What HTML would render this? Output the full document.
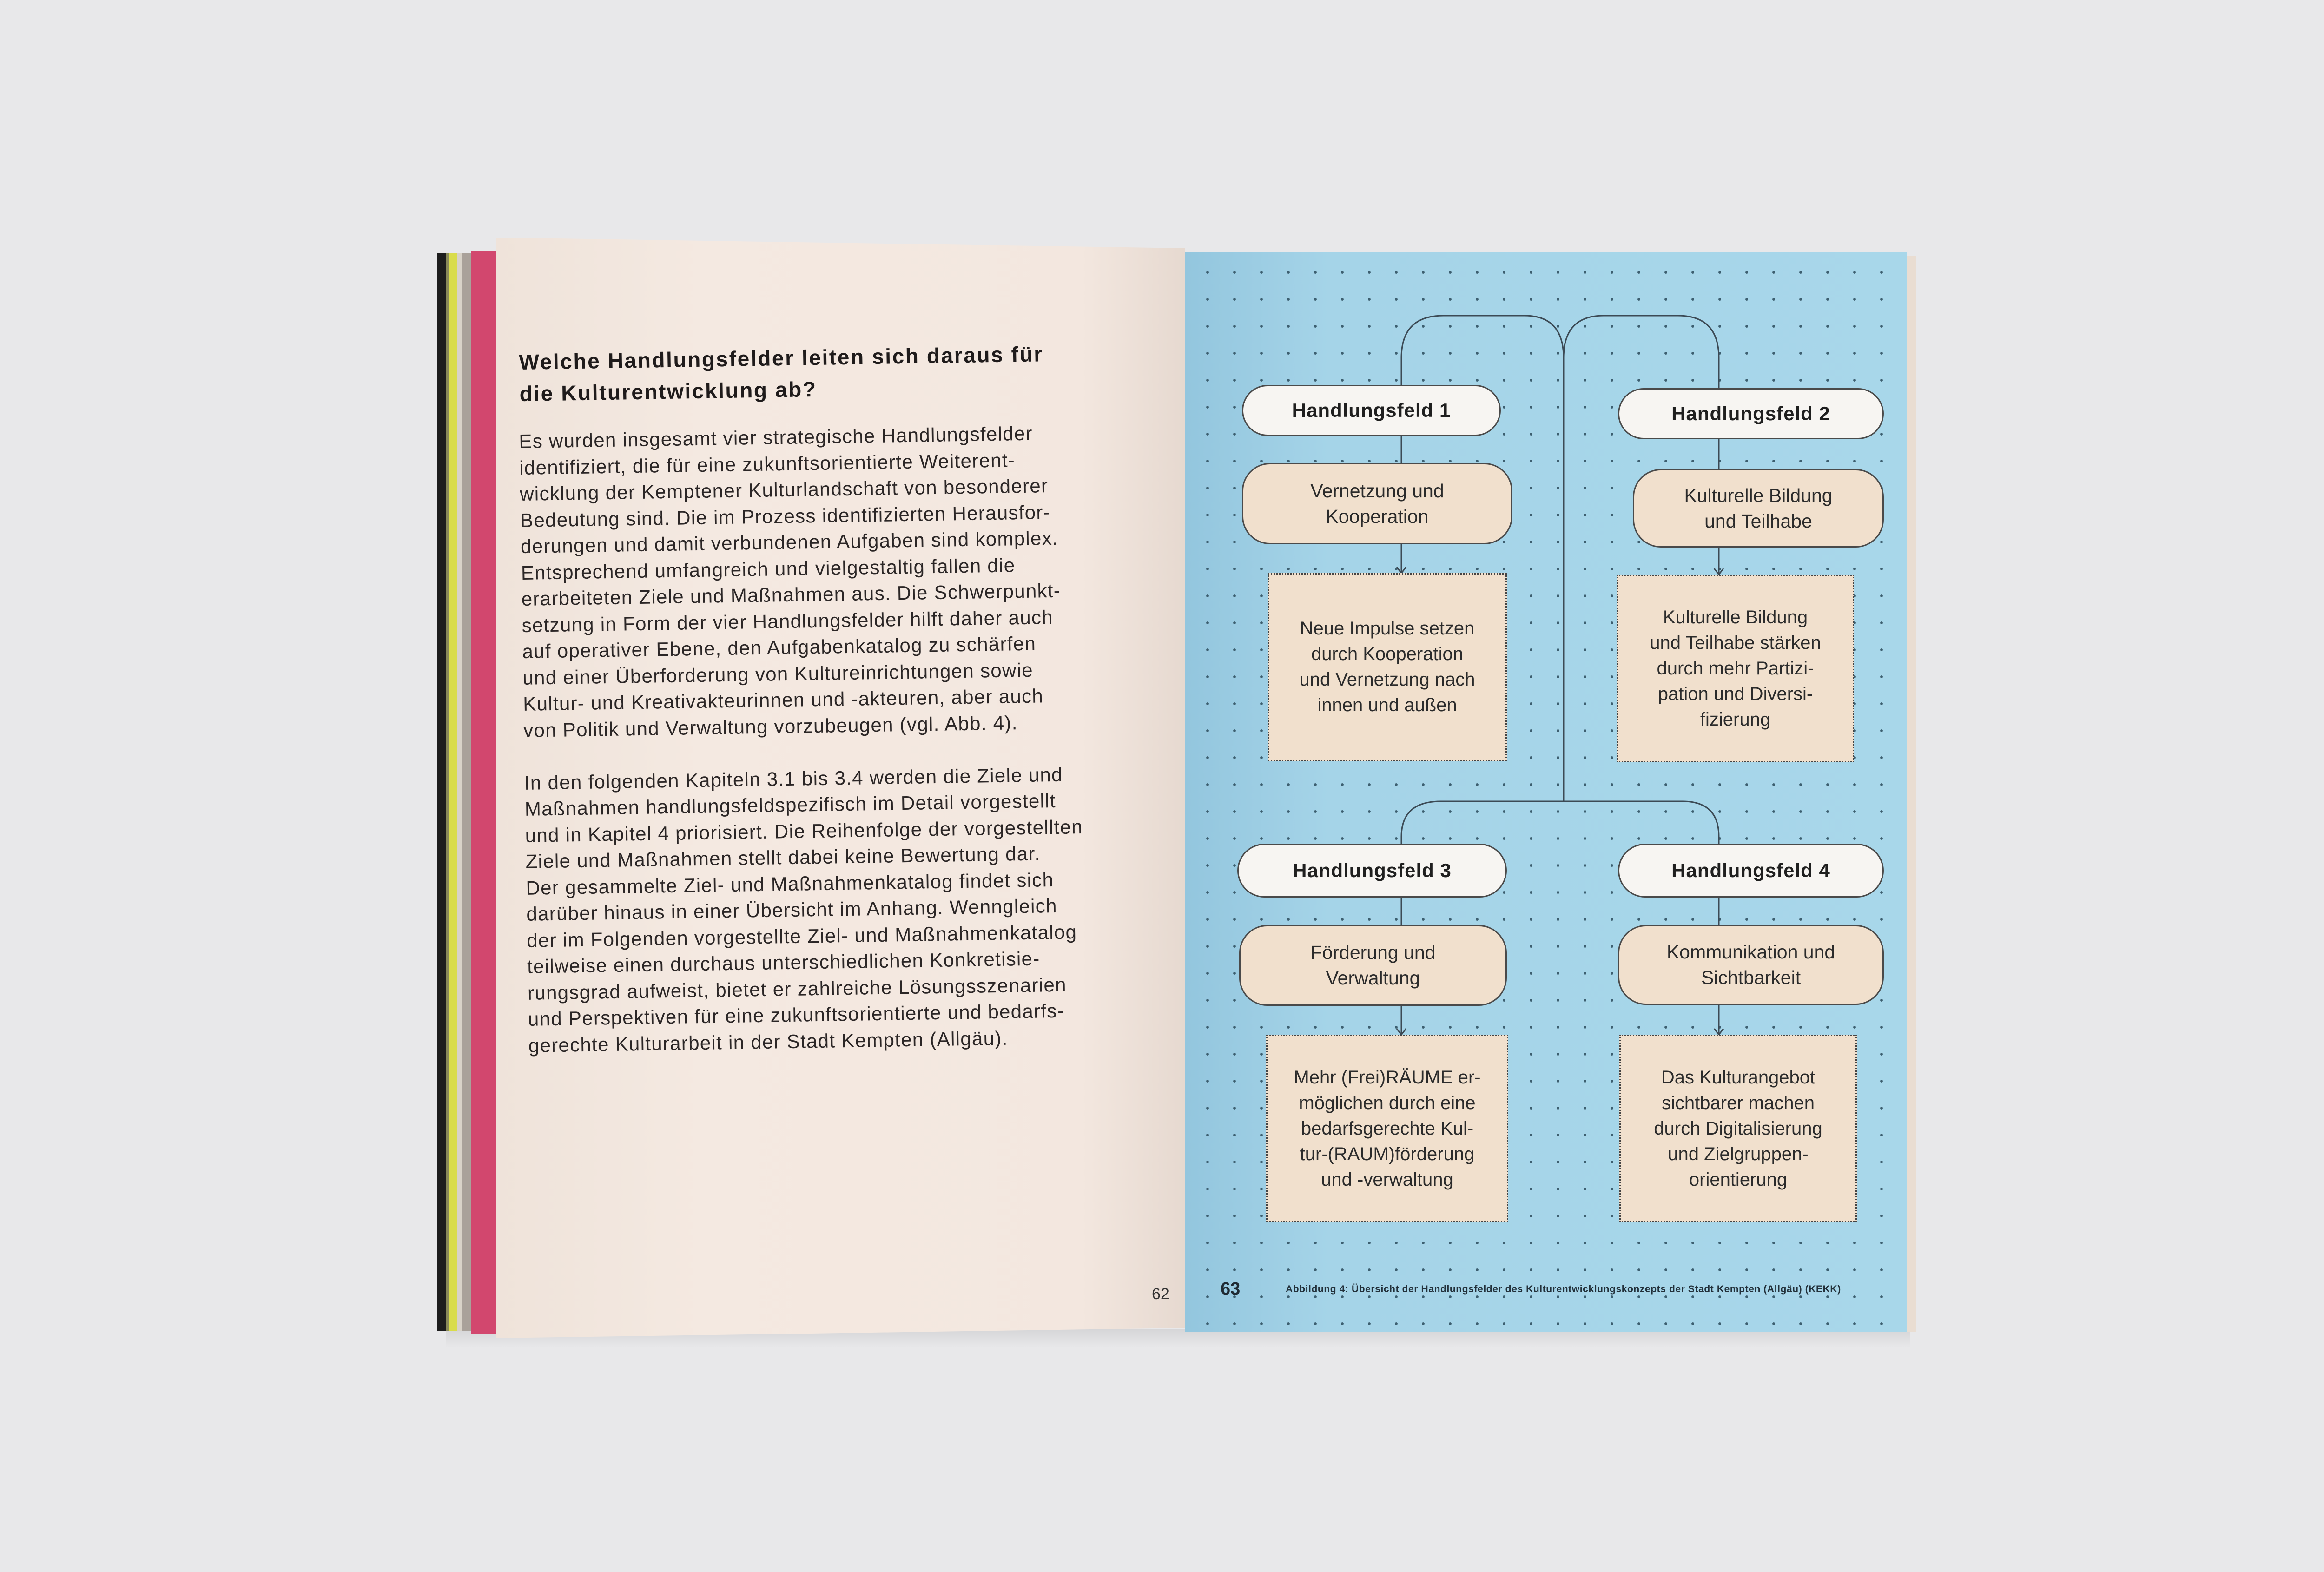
<!DOCTYPE html>
<html><head><meta charset="utf-8">
<style>
html,body{margin:0;padding:0}
body{width:5073px;height:3382px;background:#e8e8ea;position:relative;overflow:hidden;font-family:"Liberation Sans",sans-serif;color:#2a2626}
.abs{position:absolute}
.strip{position:absolute;top:545px;height:2318px}
.lp{position:absolute;left:1068px;top:511px;width:1481px;height:2368px;
 background:linear-gradient(90deg,#efe3da 0%,#f4e9e1 30%,#f3e7df 85%,#e6d9d0 100%);
 clip-path:polygon(0 0,100% 23px,100% 2346px,0 100%)}
.rp{position:absolute;left:2549px;top:543px;width:1553px;height:2323px;
 background-color:#a3d2e6;
 background-image:radial-gradient(circle,#3d5f70 2.6px,transparent 3.2px),linear-gradient(90deg,#93c6de 0%,#a5d4e8 20%,#a8d7ea 100%);
 background-size:58px 58px,100% 100%;background-position:20px 14px,0 0}
.txt{position:absolute;left:1116px;transform:rotate(-0.9deg);transform-origin:0 0;white-space:pre;font-size:42px;line-height:56.5px;letter-spacing:1.3px;color:#2b2626}
h1{margin:0;font-size:46px;line-height:68px;font-weight:bold;letter-spacing:2.6px;color:#1f1b1b}
.pill{position:absolute;border-radius:60px;border:3px solid #4a4a4a;display:flex;align-items:center;justify-content:center;text-align:center;box-sizing:border-box}
.hf{background:#f7f5f2;font-weight:bold;font-size:42px;letter-spacing:1px;color:#1f1f1f}
.sub{background:#f1e0cd;font-size:41px;line-height:55px;color:#2b2b2b}
.box{position:absolute;background:#f1e0cd;border:3px dotted #444;box-sizing:border-box;display:flex;align-items:center;justify-content:center;text-align:center;font-size:40px;line-height:55px;color:#2b2b2b}
</style></head><body>
<div class="abs" style="left:960px;top:2860px;width:3150px;height:40px;background:linear-gradient(#d6d6d8,#e8e8ea)"></div>
<div class="strip" style="left:941px;width:18px;background:#1d1d1d"></div>
<div class="strip" style="left:959px;width:6px;background:#8a8a5a"></div>
<div class="strip" style="left:965px;width:18px;background:#d9dc4a"></div>
<div class="strip" style="left:983px;width:10px;background:#d8d2c8"></div>
<div class="strip" style="left:993px;width:20px;background:#a9a19a"></div>
<div class="strip" style="left:1013px;width:55px;top:540px;height:2330px;background:#d2476e"></div>
<div class="lp"></div>
<div class="rp"></div>
<div class="abs" style="left:4102px;top:550px;width:20px;height:2316px;background:#e9ddd2"></div>

<div class="txt" style="top:745px"><h1>Welche Handlungsfelder leiten sich daraus für
die Kulturentwicklung ab?</h1></div>
<div class="txt" style="top:922px">Es wurden insgesamt vier strategische Handlungsfelder
identifiziert, die für eine zukunftsorientierte Weiterent-
wicklung der Kemptener Kulturlandschaft von besonderer
Bedeutung sind. Die im Prozess identifizierten Herausfor-
derungen und damit verbundenen Aufgaben sind komplex.
Entsprechend umfangreich und vielgestaltig fallen die
erarbeiteten Ziele und Maßnahmen aus. Die Schwerpunkt-
setzung in Form der vier Handlungsfelder hilft daher auch
auf operativer Ebene, den Aufgabenkatalog zu schärfen
und einer Überforderung von Kultureinrichtungen sowie
Kultur- und Kreativakteurinnen und -akteuren, aber auch
von Politik und Verwaltung vorzubeugen (vgl. Abb. 4).

In den folgenden Kapiteln 3.1 bis 3.4 werden die Ziele und
Maßnahmen handlungsfeldspezifisch im Detail vorgestellt
und in Kapitel 4 priorisiert. Die Reihenfolge der vorgestellten
Ziele und Maßnahmen stellt dabei keine Bewertung dar.
Der gesammelte Ziel- und Maßnahmenkatalog findet sich
darüber hinaus in einer Übersicht im Anhang. Wenngleich
der im Folgenden vorgestellte Ziel- und Maßnahmenkatalog
teilweise einen durchaus unterschiedlichen Konkretisie-
rungsgrad aufweist, bietet er zahlreiche Lösungsszenarien
und Perspektiven für eine zukunftsorientierte und bedarfs-
gerechte Kulturarbeit in der Stadt Kempten (Allgäu).</div>
<div class="abs" style="left:2478px;top:2765px;font-size:34px;color:#333">62</div>

<svg class="abs" style="left:0;top:0" width="5073" height="3382">
<g fill="none" stroke="#3c4a55" stroke-width="3">
<path d="M3015 830 V770 Q3015 679 3105 679 H3280 Q3364 679 3364 770 V1724"/>
<path d="M3364 770 Q3364 679 3450 679 H3610 Q3698 679 3698 770 V838"/>
<path d="M3015 1818 V1800 Q3015 1724 3100 1724 H3620 Q3698 1724 3698 1800 V1818"/>
<path d="M3015 936 V998 M3015 1169 V1233"/>
<path d="M3698 943 V1010 M3698 1176 V1236"/>
<path d="M3015 1929 V1992 M3015 2162 V2226"/>
<path d="M3698 1929 V1992 M3698 2162 V2226"/>
<path d="M3005 1220 L3015 1233 L3025 1220 M3688 1223 L3698 1236 L3708 1223 M3005 2213 L3015 2226 L3025 2213 M3688 2213 L3698 2226 L3708 2213"/>
</g></svg>

<div class="pill hf" style="left:2672px;top:828px;width:557px;height:110px">Handlungsfeld 1</div>
<div class="pill hf" style="left:3481px;top:835px;width:572px;height:110px">Handlungsfeld 2</div>
<div class="pill sub" style="left:2672px;top:996px;width:582px;height:175px">Vernetzung und<br>Kooperation</div>
<div class="pill sub" style="left:3513px;top:1009px;width:540px;height:169px">Kulturelle Bildung<br>und Teilhabe</div>
<div class="box" style="left:2727px;top:1233px;width:515px;height:404px">Neue Impulse setzen<br>durch Kooperation<br>und Vernetzung nach<br>innen und außen</div>
<div class="box" style="left:3478px;top:1236px;width:511px;height:404px">Kulturelle Bildung<br>und Teilhabe stärken<br>durch mehr Partizi-<br>pation und Diversi-<br>fizierung</div>

<div class="pill hf" style="left:2662px;top:1815px;width:580px;height:116px">Handlungsfeld 3</div>
<div class="pill hf" style="left:3481px;top:1815px;width:572px;height:116px">Handlungsfeld 4</div>
<div class="pill sub" style="left:2666px;top:1990px;width:576px;height:174px">Förderung und<br>Verwaltung</div>
<div class="pill sub" style="left:3481px;top:1990px;width:572px;height:172px">Kommunikation und<br>Sichtbarkeit</div>
<div class="box" style="left:2724px;top:2226px;width:521px;height:404px">Mehr (Frei)RÄUME er-<br>möglichen durch eine<br>bedarfsgerechte Kul-<br>tur-(RAUM)förderung<br>und -verwaltung</div>
<div class="box" style="left:3484px;top:2226px;width:511px;height:404px">Das Kulturangebot<br>sichtbarer machen<br>durch Digitalisierung<br>und Zielgruppen-<br>orientierung</div>

<div class="abs" style="left:2626px;top:2752px;font-size:38px;font-weight:bold;color:#1f2a33">63</div>
<div class="abs" style="left:2766px;top:2762px;font-size:21px;font-weight:bold;letter-spacing:0.6px;color:#22303a;white-space:nowrap">Abbildung 4: Übersicht der Handlungsfelder des Kulturentwicklungskonzepts der Stadt Kempten (Allgäu) (KEKK)</div>
</body></html>
